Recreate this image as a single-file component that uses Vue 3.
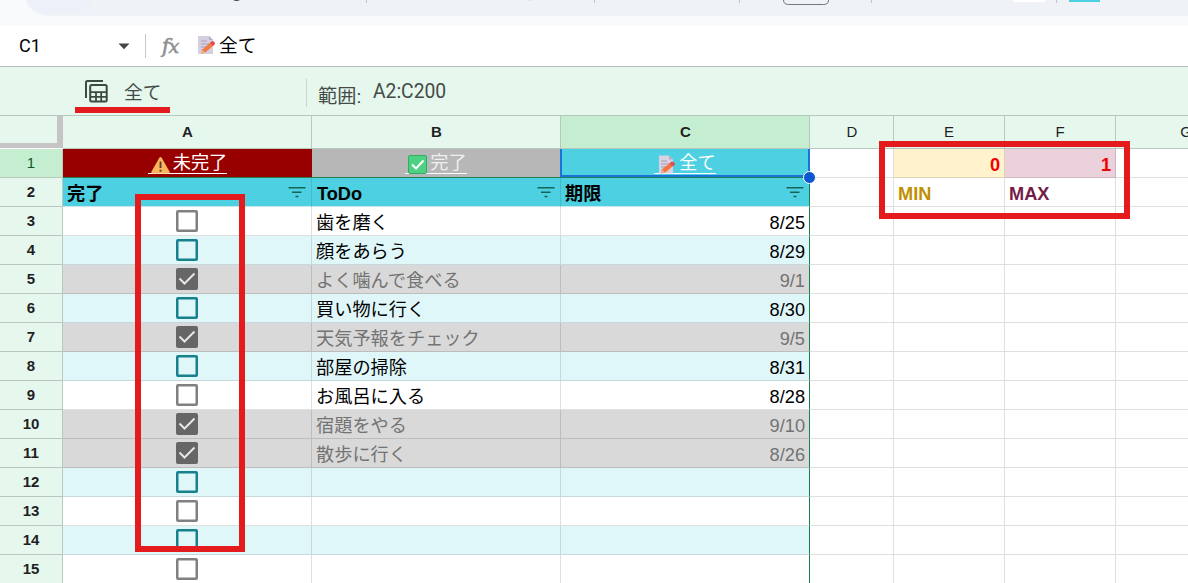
<!--
  App.vue — スプレッドシート（ToDo 一覧・フィルタ表示）
-->

<template>
  <div class="sheet-app">
    <!-- ツールバー下端 -->
    <svg class="toolbar" viewBox="0 0 1188 26" width="1188" height="26">
      <rect width="1188" height="26" fill="#f9fafc" />
      <path d="M25 0C29 10 38 16 52 16H1188V0Z" fill="#eff2f7" />
      <path d="M27 0C31 7 38 12 48 13H74C84 11 90 6 92 0Z" fill="#ecf0f9" />
      <path d="M233 0h7q-3.500 2-7 0z" fill="#444746" />
      <path d="M366.500 0v3M594.500 0v3M739.500 0v3M871.500 0v3M1056.500 0v3" stroke="#c0c4ca" />
      <path d="M529 0h1" stroke="#a0a4aa" />
      <path d="M783.500 0q0 4.500 5 4.500h35q5 0 5-4.500" fill="none" stroke="#747775" />
      <rect x="1013" width="32" height="2" fill="#fff" />
      <rect x="1069" width="31" height="2" fill="#4dd0e1" />
    </svg>

    <!-- 数式バー -->
    <div class="formula-bar">
      <span class="cell-name">C1</span>
      <svg class="caret" width="12" height="7" viewBox="0 0 12 7"><path d="M0.500 0.500h11L6 6.200z" fill="#444746" /></svg>
      <span class="fx"><i>f</i><i class="x">x</i></span>
      <svg class="memo" width="18" height="20" viewBox="0 0 18 20">
        <path d="M1 1h11l4 4v14H1z" fill="#d5cfdf" />
        <path d="M12 1v4h4z" fill="#b6adc4" />
        <path d="M4 6h6M4 9h9M4 12h7M4 15h3" stroke="#aca2bb" />
        <path d="M4 19l2-5 8-7 3 3-8 7z" fill="#f47a43" />
        <path d="M13 8l2-2q3 0 3 3l-2 2z" fill="#e64c54" />
        <path d="M4 19l1.500-4 2.500 2.500z" fill="#e9b68b" />
      </svg>
      <span class="formula">全て</span>
    </div>

    <!-- フィルタ表示バー -->
    <div class="filter-bar">
      <svg class="view-icon" width="23" height="23" viewBox="0 0 23 23" fill="none" stroke="#3c4a42" stroke-width="2">
        <path d="M1 18V2.500Q1 1 2.500 1H18" />
        <rect x="5.200" y="5" width="16.500" height="16.500" rx="1.500" />
        <path d="M5 12.200h17M5 16.800h17M11 12v9.500M16.200 12v9.500" stroke-width="1.800" />
      </svg>
      <span class="view-name">全て</span>
      <span class="divider"></span>
      <span class="range-label">範囲:</span>
      <span class="range">A2:C200</span>
    </div>

    <!-- 列見出し -->
    <div class="row col-heads">
      <div class="row-no corner"></div>
      <div
        v-for="c in cols"
        :key="c"
        class="cell head"
        :class="[c, { bold: 'ABC'.includes(c), selected: c === 'C' }]"
      >{{ c }}</div>
    </div>

    <!-- 1行目：リンク -->
    <div class="row links">
      <div class="row-no selected">1</div>
      <div class="cell A">
        <span class="link">
          <svg width="19" height="18" viewBox="0 0 19 18">
            <path d="M8.500 1.500q1-1.200 2 0l8 14q.5 2-1 2h-16q-1.500 0-1-2z" fill="#fbb55c" />
            <path d="M9.500 5.500v6.500M9.500 13.700v2" stroke="#553c36" stroke-width="1.800" />
          </svg>未完了
        </span>
      </div>
      <div class="cell B">
        <span class="link">
          <svg width="19" height="19" viewBox="0 0 19 19">
            <rect x=".5" y=".5" width="18" height="18" rx="1.500" fill="#4fd184" stroke="#32ad68" />
            <path d="M4 9.500l4 4 7.500-8" fill="none" stroke="#fff" stroke-width="2" />
          </svg>完了
        </span>
      </div>
      <div class="cell C">
        <span class="link">
          <svg width="19" height="19" viewBox="0 0 19 19">
            <path d="M2 .5h10l4 4v14H2z" fill="#d9d2e2" />
            <path d="M12 .5v4h4z" fill="#b6adc4" />
            <path d="M4 6h6M4 9h9M4 12h7M4 15h3" stroke="#a79bb8" />
            <path d="M4 18.500l2-5 7-5.500 3 3-7 6z" fill="#f4743f" />
            <path d="M12.500 8.500l2-2q3 0 3.500 3l-2.300 2z" fill="#e64c54" />
            <path d="M4 18.500l1.500-3.500 2 2z" fill="#e9b68b" />
          </svg>全て
        </span>
        <span class="handle"></span>
      </div>
      <div class="cell D"></div>
      <div class="cell E num">0</div>
      <div class="cell F num">1</div>
      <div class="cell G"></div>
    </div>

    <!-- 2行目：見出し -->
    <div class="row titles">
      <div class="row-no">2</div>
      <div v-for="t in titles" :key="t.col" class="cell" :class="t.col">
        {{ t.label }}
        <svg class="filter" width="18" height="12" viewBox="0 0 18 12">
          <path d="M.5 1.700h17M4 6.200h9.500M7.500 10.500h3" stroke="#176457" stroke-width="1.500" />
        </svg>
      </div>
      <div class="cell D"></div>
      <div class="cell E">MIN</div>
      <div class="cell F">MAX</div>
      <div class="cell G"></div>
    </div>

    <!-- データ行 -->
    <div
      v-for="(r, i) in rows"
      :key="i"
      class="row data"
      :class="{ band: i % 2 === 1, done: r.done }"
    >
      <div class="row-no">{{ i + 3 }}</div>
      <div class="cell A">
        <span class="check">
          <svg v-if="r.done" width="22" height="22" viewBox="0 0 22 22">
            <path d="M3.500 10.500l5 5L18.500 5.500" fill="none" stroke="#e6e6e6" stroke-width="2" />
          </svg>
        </span>
      </div>
      <div class="cell B">{{ r.todo }}</div>
      <div class="cell C">{{ r.due }}</div>
      <div class="cell D"></div>
      <div class="cell E"></div>
      <div class="cell F"></div>
      <div class="cell G"></div>
    </div>

    <!-- 赤枠の注釈 -->
    <div class="mark mark-view"></div>
    <div class="mark mark-checks"></div>
    <div class="mark mark-minmax"></div>
  </div>
</template>

<script setup>
const cols = ['A', 'B', 'C', 'D', 'E', 'F', 'G']

const titles = [
  { col: 'A', label: '完了' },
  { col: 'B', label: 'ToDo' },
  { col: 'C', label: '期限' }
]

const rows = [
  { todo: '歯を磨く', due: '8/25', done: false },
  { todo: '顔をあらう', due: '8/29', done: false },
  { todo: 'よく噛んで食べる', due: '9/1', done: true },
  { todo: '買い物に行く', due: '8/30', done: false },
  { todo: '天気予報をチェック', due: '9/5', done: true },
  { todo: '部屋の掃除', due: '8/31', done: false },
  { todo: 'お風呂に入る', due: '8/28', done: false },
  { todo: '宿題をやる', due: '9/10', done: true },
  { todo: '散歩に行く', due: '8/26', done: true },
  { todo: '', due: '', done: false },
  { todo: '', due: '', done: false },
  { todo: '', due: '', done: false },
  { todo: '', due: '', done: false }
]
</script>

<style>
body {
  margin: 0;
  overflow: hidden;
}
</style>

<style scoped>
* {
  box-sizing: border-box;
}

.sheet-app {
  position: relative;
  width: 1188px;
  height: 583px;
  overflow: hidden;
  background: #fff;
  color: #000;
  font: 18.2px 'Liberation Sans', 'Noto Sans CJK JP', sans-serif;
  white-space: nowrap;
}

svg {
  display: block;
  flex: none;
}

/* ---------- 数式バー ---------- */
.formula-bar {
  display: flex;
  align-items: center;
  height: 41px;
  border-bottom: 1px solid #b9c0bc;
}

.cell-name {
  width: 118px;
  margin-top: -1px;
  padding-left: 19px;
  font: 18px Roboto, sans-serif;
}

.fx {
  width: 36px;
  height: 24px;
  margin-left: 15px;
  padding-left: 16px;
  border-left: 1px solid #c7c7c7;
  font: 20px/25px 'DejaVu Serif', serif;
  -webkit-text-stroke: 0.6px #8f9192;
  color: #8f9192;
}

.fx .x {
  margin-left: -1px;
  font-size: 19px;
}

.memo {
  margin: -2px 0 0 16px;
}

.formula {
  margin: -5px 0 0 4px;
  font-size: 18.700px;
}

/* ---------- フィルタ表示バー ---------- */
.filter-bar {
  display: flex;
  align-items: center;
  height: 49px;
  padding-left: 85px;
  background: #e6f7ed;
  border-bottom: 1px solid #b7c9be;
  color: #444b47;
}

.view-icon {
  margin-top: 1px;
}

.view-name {
  width: 183px;
  margin-top: -2px;
  padding-left: 16px;
  font-size: 18.700px;
}

.divider {
  width: 1px;
  height: 28px;
  margin: 4px 0 0 15px;
  background: #c8d8ce;
}

.range-label {
  width: 55px;
  margin: 8px 0 0 11px;
  font-size: 19.200px;
}

.range {
  font: 19.300px Roboto, sans-serif;
}

/* ---------- 表 ---------- */
.row {
  display: flex;
  height: 29px;
}

.row-no,
.cell {
  flex: none;
  border-right: 1px solid #dedfde;
  border-bottom: 1px solid #dedfde;
}

.row-no {
  width: 63px;
  background: #e6f7ed;
  border-color: #bac8c0;
  font-size: 15px;
  font-weight: bold;
  line-height: 28px;
  text-align: center;
  color: #1f1f1f;
}

.row-no.selected {
  background: #c5eed0;
  font-weight: normal;
  color: #0b5b2b;
}

.cell {
  position: relative;
  display: flex;
  align-items: center;
  width: 249px;
  padding: 2px 4px 0;
}

.D { width: 84px; }
.E, .F { width: 111px; }
.G { width: 140px; }

.col-heads {
  height: 33px;
}

.corner {
  border-right: 6px solid #c6c4c4;
  border-bottom: 5px solid #c6c4c4;
  height: 32px;
}

.head {
  justify-content: center;
  padding: 0 0 2px 1px;
  background: #e6f7ed;
  border-color: #b7c9be;
  font-size: 15px;
  color: #1f1f1f;
}

.head.E, .head.F {
  padding-left: 0;
}

.head.bold {
  font-weight: bold;
}

.head.selected {
  background: #c5eed0;
}

/* ---------- リンク行 ---------- */
.links .A, .links .B, .links .C {
  justify-content: center;
  padding: 0 3px;
  border-bottom-color: #23804c;
  color: #fff;
}

.links .A {
  background: #980000;
  border-right: 0;
}

.links .B {
  width: 248px;
  background: #b7b7b7;
  color: #efefef;
  border-right: 0;
}

.links .C {
  width: 250px;
  background: #4dd0e1;
  border-left: 2px solid #1a73d9;
  border-right: 2px solid #1a73d9;
  box-shadow: inset 0 -2px #1a73d9;
}

.link {
  position: relative;
  display: flex;
  align-items: center;
  height: 24px;
  padding-left: 3px;
  line-height: 26px;
}

.link::before {
  content: '';
  position: absolute;
  right: 0;
  bottom: 1px;
  left: 0;
  height: 1px;
  background: #fff;
}

.link svg {
  position: relative;
  margin: 3px 3px 0 0;
}

.handle {
  position: absolute;
  z-index: 2;
  right: -8px;
  bottom: -7px;
  width: 13px;
  height: 13px;
  border: 1px solid #fff;
  border-radius: 50%;
  background: #0b57d0;
}

.num {
  justify-content: flex-end;
  padding-top: 5px;
  font-weight: bold;
  color: #f00000;
}

.links .E { background: #fff2cc; border-color: #dfd3b3; }
.links .F { background: #ead1dc; border-color: #cdb7c0; }

/* ---------- 見出し行 ---------- */
.titles {
  font-weight: bold;
}

.titles .cell {
  padding: 4px 4px 0;
}

.titles .A, .titles .B, .titles .C {
  justify-content: space-between;
  background: #4dd0e1;
  border-right-color: #45b9c8;
  border-bottom-color: #c9e6ea;
}

.titles .A, .titles .C {
  padding-top: 0;
}

.titles .B {
  padding-left: 5px;
}

.filter {
  margin: -4px 1px 0 0;
}

.titles .A .filter, .titles .C .filter {
  margin-top: 0;
}

.titles .E { color: #bf9000; }
.titles .F { color: #741b47; }

/* ---------- データ行 ---------- */
.data .A {
  justify-content: center;
  padding: 0;
}

.data .B {
  padding: 0 4px;
}

.data .C {
  justify-content: flex-end;
  padding: 4px 4px 0;
}

.band .A, .band .B, .band .C {
  background: #e0f7fa;
  border-bottom-color: #c6d8db;
}

.band .A, .band .B {
  border-right-color: #c6d8db;
}

.done .A, .done .B, .done .C {
  background: #d9d9d9;
  border-bottom-color: #bdbdbd;
  color: #737373;
}

.done .A, .done .B {
  border-right-color: #bdbdbd;
}

/* フィルタ範囲の右端 */
.data .cell.C,
.titles .cell.C {
  border-right-color: #188048;
}

.check {
  width: 22px;
  height: 22px;
  border: 2px solid #808080;
  border-radius: 2px;
  box-shadow: inset 0 0 0 0.5px #808080;
}

.band .check {
  border-color: #16808d;
  box-shadow: inset 0 0 0 0.5px #16808d;
}

.done .check {
  border: 0;
  background: #666;
  box-shadow: none;
}

/* ---------- 注釈 ---------- */
.mark {
  position: absolute;
  z-index: 3;
  border: 6px solid #e31b1d;
}

.mark-view {
  left: 75px;
  top: 107px;
  width: 95px;
  height: 6px;
  border-width: 3px;
}

.mark-checks {
  left: 135px;
  top: 194px;
  width: 110px;
  height: 358px;
}

.mark-minmax {
  left: 879px;
  top: 141px;
  width: 251px;
  height: 78px;
}
</style>
